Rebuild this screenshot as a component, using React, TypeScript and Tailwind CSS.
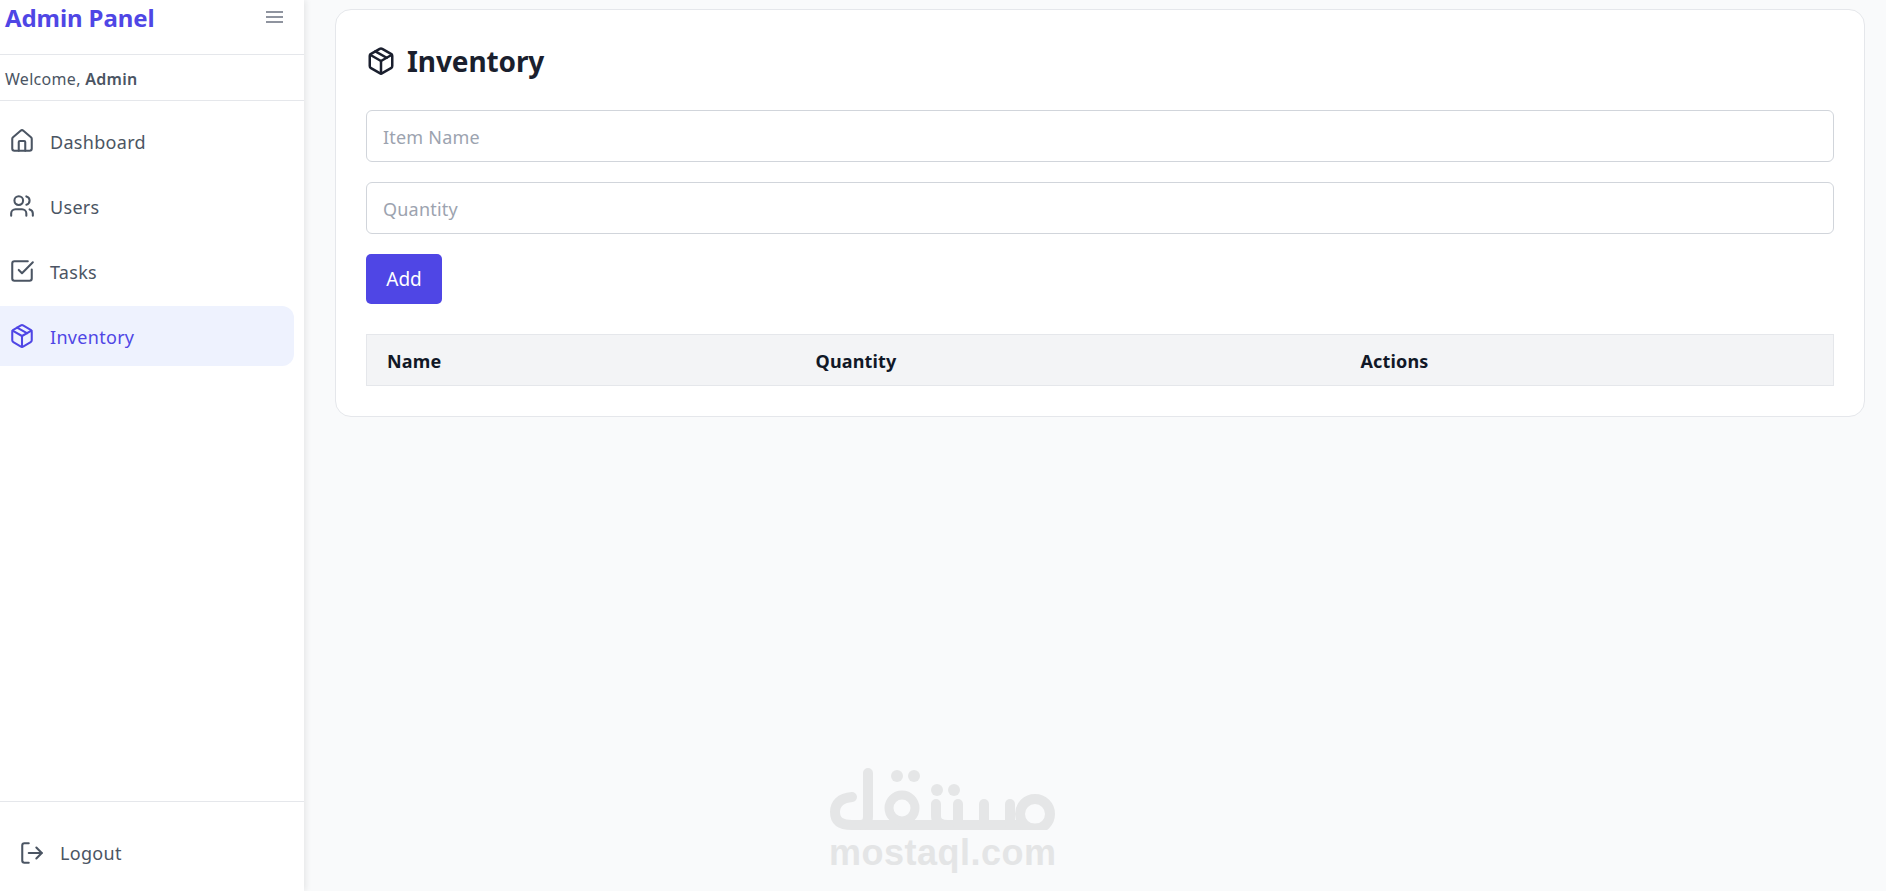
import { House, Users, SquareCheckBig, Package, LogOut } from "lucide-react";

function NavItem({ icon: Icon, label, active }: { icon: any; label: string; active?: boolean }) {
  return (
    <a
      className={
        active
          ? "flex h-[60px] w-[294px] items-center gap-[15px] rounded-r-[12px] bg-[#eef2fe] pl-[9px] text-[18px] tracking-[0.3px] text-[#4f46e5]"
          : "flex h-[60px] w-[294px] items-center gap-[15px] pl-[9px] text-[18px] tracking-[0.3px] text-[#4b5563]"
      }
    >
      <Icon size={26} strokeWidth={1.9} className="shrink-0" />
      <span className="pt-[2px]">{label}</span>
    </a>
  );
}

function Watermark() {
  return (
    <div className="pointer-events-none absolute left-[780px] top-[740px] h-[151px] w-[320px]">
      <svg width="320" height="90" viewBox="0 0 320 90" fill="none" className="absolute left-0 top-0">
        <g stroke="#e5e6e7" strokeWidth="10" strokeLinecap="round">
          <path d="M72 57C60 58 55 64 55 72C55 82 62 85 72 85L240 85C248 89 258 89 262 88" />
          <path d="M88 33V76C88 82 86 85 80 85" />
          <circle cx="122" cy="68" r="13" strokeWidth="9" />
          <path d="M156 64V76C156 82 160 85 168 85L205 85" />
          <path d="M178 64V84" />
          <path d="M204 64V84" />
          <path d="M230 64V84" />
          <circle cx="255" cy="74" r="15" />
        </g>
        <g fill="#e5e6e7">
          <circle cx="117" cy="36" r="6" />
          <circle cx="134" cy="36" r="6" />
          <circle cx="157" cy="50" r="6" />
          <circle cx="174" cy="50" r="6" />
        </g>
      </svg>
      <span className="absolute left-[49px] top-[92px] font-['Liberation_Sans',sans-serif] text-[36px] font-bold leading-[42px] tracking-[0.5px] text-[#e4e5e6]">
        mostaql.com
      </span>
    </div>
  );
}

export default function App() {
  return (
    <div className="relative flex h-[891px] overflow-hidden bg-[#f9fafb] font-['Noto_Sans',sans-serif]">
      <aside className="flex h-full w-[304px] shrink-0 flex-col bg-white shadow-[2px_0_6px_rgba(0,0,0,0.08)]">
        <div className="flex h-[55px] shrink-0 items-start justify-between border-b border-[#e5e7eb] pl-[5px] pr-[21px]">
          <h1 className="text-[24px] font-bold leading-[36px] tracking-[-0.1px] text-[#4f46e5]">Admin Panel</h1>
          <svg width="17" height="12" viewBox="0 0 17 12" fill="none" stroke="#6b7280" strokeWidth="1.5" className="mt-[11px]">
            <path d="M0 1H17M0 6H17M0 11H17" />
          </svg>
        </div>
        <div className="flex h-[46px] shrink-0 items-center border-b border-[#e5e7eb] pl-[5px] text-[16px] tracking-[0.3px] text-[#4b5563]">
          <span className="pt-[2px]">
            Welcome, <strong className="font-semibold">Admin</strong>
          </span>
        </div>
        <nav className="flex flex-1 flex-col gap-[5px] pt-[10px]">
          <NavItem icon={House} label="Dashboard" />
          <NavItem icon={Users} label="Users" />
          <NavItem icon={SquareCheckBig} label="Tasks" />
          <NavItem icon={Package} label="Inventory" active />
        </nav>
        <div className="flex h-[90px] shrink-0 items-center gap-[15px] border-t border-[#e5e7eb] pl-[19px] pt-[12px] text-[18px] tracking-[0.3px] text-[#4b5563]">
          <LogOut size={26} strokeWidth={1.9} />
          <span className="pt-[2px]">Logout</span>
        </div>
      </aside>
      <main className="flex-1 pl-[31px] pr-[21px] pt-[9px]">
        <section className="h-[408px] rounded-[16px] border border-[#e5e7eb] bg-white px-[30px] pt-[33px]">
          <h2 className="flex h-[36px] items-center gap-[11px] text-[28px] font-bold tracking-[-0.1px] text-[#1a1f2e]">
            <Package size={30} strokeWidth={2} />
            Inventory
          </h2>
          <div className="mt-[31px] flex flex-col gap-[20px]">
            <input
              placeholder="Item Name"
              className="h-[52px] w-full rounded-[6px] border border-[#d1d5db] px-[16px] pt-[2px] text-[18px] tracking-[0.2px] placeholder:text-[#9ca3af]"
            />
            <input
              placeholder="Quantity"
              className="h-[52px] w-full rounded-[6px] border border-[#d1d5db] px-[16px] pt-[2px] text-[18px] tracking-[0.2px] placeholder:text-[#9ca3af]"
            />
          </div>
          <button className="mt-[20px] h-[50px] w-[76px] rounded-[5px] bg-[#4f46e5] pt-[1px] text-[19px] text-white">Add</button>
          <table className="mt-[30px] w-full table-fixed border-collapse">
            <thead>
              <tr className="h-[51px] bg-[#f3f4f6] text-left text-[18px] font-bold tracking-[0.15px] text-[#111827]">
                <th className="w-[428px] border-y border-l border-[#e5e7eb] pl-[20px] pt-[2px] font-bold">Name</th>
                <th className="w-[545px] border-y border-[#e5e7eb] pl-[21px] pt-[2px] font-bold">Quantity</th>
                <th className="border-y border-r border-[#e5e7eb] pl-[21px] pt-[2px] font-bold">Actions</th>
              </tr>
            </thead>
          </table>
        </section>
      </main>
      <Watermark />
    </div>
  );
}
